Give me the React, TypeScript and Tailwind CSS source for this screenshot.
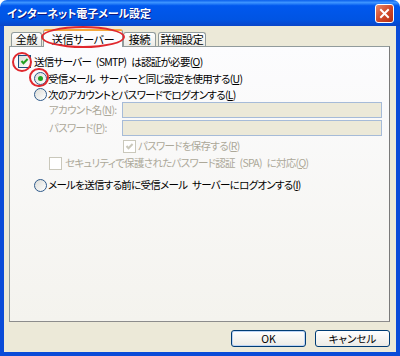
import React from "react";

function Check({ checked, disabled }: { checked?: boolean; disabled?: boolean }) {
  return (
    <span
      className={`relative inline-block w-[13px] h-[13px] shrink-0 border ${
        disabled ? "border-[#CAC8BB] bg-white" : "border-[#1C5180] bg-[linear-gradient(135deg,#DCDCD7,#FFFFFF)]"
      }`}
    >
      {checked && (
        <svg viewBox="0 0 11 11" className="absolute left-0 top-0 w-[11px] h-[11px]">
          <path
            d="M2.5 5 L4.5 7.2 L8.6 3"
            stroke={disabled ? "#CAC8BB" : "#21A121"}
            strokeWidth="2"
            fill="none"
          />
        </svg>
      )}
    </span>
  );
}

function Radio({ checked }: { checked?: boolean }) {
  return (
    <span className="relative inline-flex w-[13px] h-[13px] shrink-0 rounded-full border border-[#2F5A8A] bg-[linear-gradient(135deg,#DCDCD7,#FFFFFF)] items-center justify-center">
      {checked && <span className="w-[5px] h-[5px] rounded-full bg-[#21A121]" />}
    </span>
  );
}

function U({ c }: { c: string }) {
  return (
    <>
      (<span className="underline">{c}</span>)
    </>
  );
}

export default function App() {
  return (
    <div className="relative w-[400px] h-[356px] flex flex-col font-['Noto_Sans_CJK_JP',sans-serif] [font-feature-settings:'palt'] text-[10.5px] tracking-[-0.7px] [word-spacing:3px] text-black overflow-hidden whitespace-nowrap">
      {/* Title bar */}
      <div className="h-[26px] shrink-0 flex items-center rounded-t-[7px] bg-[linear-gradient(to_bottom,#0A5FEC_0%,#3D95FF_10%,#0058EE_22%,#0054E3_75%,#0A45C8_100%)]">
        <span className="ml-[7px] text-white font-bold text-[11px] tracking-[-0.1px] [text-shadow:1px_1px_0_#0A1883]">
          インターネット電子メール設定
        </span>
        <div className="ml-auto mr-[6px] w-[19px] h-[19px] rounded-[3px] border border-white bg-[linear-gradient(135deg,#E88A6C,#D24A2A_50%,#B52F14)] flex items-center justify-center">
          <svg viewBox="0 0 11 11" className="w-[11px] h-[11px]">
            <path d="M2 2 L9 9 M9 2 L2 9" stroke="white" strokeWidth="2" strokeLinecap="square" />
          </svg>
        </div>
      </div>

      {/* Body */}
      <div className="flex-1 flex flex-col border-x-4 border-b-4 border-[#0A4BD8] bg-[#ECE9D8]">
        {/* Tabs */}
        <div className="mt-[3px] h-[17px] flex items-end text-[11px] tracking-[-0.3px]">
          <div className="ml-[7px] w-[31px] h-[14px] border border-b-0 border-[#919B9C] rounded-t-[3px] bg-[linear-gradient(to_bottom,#FFFFFF,#ECEBE6)] flex items-center justify-center">
            全般
          </div>
          <div className="relative z-10 ml-[1px] w-[80px] h-[18px] -mb-px border border-b-0 border-[#919B9C] border-t-[2px] border-t-[#F5A83C] rounded-t-[3px] bg-[#FCFCFE] flex items-center justify-center">
            送信サーバー
          </div>
          <div className="w-[33px] h-[14px] border border-b-0 border-[#919B9C] rounded-t-[3px] bg-[linear-gradient(to_bottom,#FFFFFF,#ECEBE6)] flex items-center justify-center">
            接続
          </div>
          <div className="ml-[2px] w-[48px] h-[14px] border border-b-0 border-[#919B9C] rounded-t-[3px] bg-[linear-gradient(to_bottom,#FFFFFF,#ECEBE6)] flex items-center justify-center">
            詳細設定
          </div>
        </div>

        {/* Panel */}
        <div className="ml-[5px] mr-[6px] h-[276px] border border-[#919B9C] border-r-[#7A7A7A] border-b-[#8C8C8C] bg-[linear-gradient(to_bottom,#FCFCFE,#F4F3EE)] pt-[6px] flex flex-col">
          <div className="h-[17px] flex items-center pl-[8px] gap-[3px]">
            <Check checked />
            <span>
              送信サーバー (SMTP) は認証が必要<U c="O" />
            </span>
          </div>
          <div className="h-[17px] flex items-center pl-[24px] gap-[1px]">
            <Radio checked />
            <span>
              受信メール サーバーと同じ設定を使用する<U c="U" />
            </span>
          </div>
          <div className="h-[15px] flex items-center pl-[24px] gap-[1px]">
            <Radio />
            <span>
              次のアカウントとパスワードでログオンする<U c="L" />
            </span>
          </div>
          <div className="h-[16px] flex items-center text-[#ACA899]">
            <span className="ml-[39px] w-[73px]">
              アカウント名<U c="N" />:
            </span>
            <div className="w-[260px] h-[16px] border border-[#A6BBD8] bg-[#ECE9D8]" />
          </div>
          <div className="mt-[2px] h-[16px] flex items-center text-[#ACA899]">
            <span className="ml-[39px] w-[73px]">
              パスワード<U c="P" />:
            </span>
            <div className="w-[260px] h-[16px] border border-[#A6BBD8] bg-[#ECE9D8]" />
          </div>
          <div className="mt-[2px] h-[16px] flex items-center pl-[113px] gap-[2px] text-[#ACA899]">
            <Check checked disabled />
            <span>
              パスワードを保存する<U c="R" />
            </span>
          </div>
          <div className="mt-[1px] h-[16px] flex items-center pl-[39px] gap-[3px] text-[#ACA899]">
            <Check disabled />
            <span>
              セキュリティで保護されたパスワード認証 (SPA) に対応<U c="Q" />
            </span>
          </div>
          <div className="mt-[6px] h-[16px] flex items-center pl-[24px] gap-[1px]">
            <Radio />
            <span>
              メールを送信する前に受信メール サーバーにログオンする<U c="I" />
            </span>
          </div>
        </div>

        {/* Buttons */}
        <div className="mt-[8px] flex justify-end gap-[9px] pr-[6px] tracking-[0px]">
          <div className="w-[75px] h-[17px] rounded-[3px] border border-[#003C74] bg-[linear-gradient(to_bottom,#FFFFFF,#ECEBE6)] shadow-[inset_0_0_0_1px_#BCD4F6] flex items-center justify-center">
            OK
          </div>
          <div className="w-[75px] h-[17px] rounded-[3px] border border-[#003C74] bg-[linear-gradient(to_bottom,#FFFFFF,#ECEBE6)] flex items-center justify-center">
            キャンセル
          </div>
        </div>
      </div>

      {/* Red annotations */}
      <div className="absolute left-[41px] top-[26px] w-[84px] h-[22px] rounded-[50%] border-2 border-[#E0282E] z-20" />
      <div className="absolute left-[12px] top-[52px] w-[20px] h-[20px] rounded-full border-2 border-[#E0282E] z-20" />
      <div className="absolute left-[29px] top-[68px] w-[20px] h-[19px] rounded-full border-2 border-[#E0282E] z-20" />
    </div>
  );
}
